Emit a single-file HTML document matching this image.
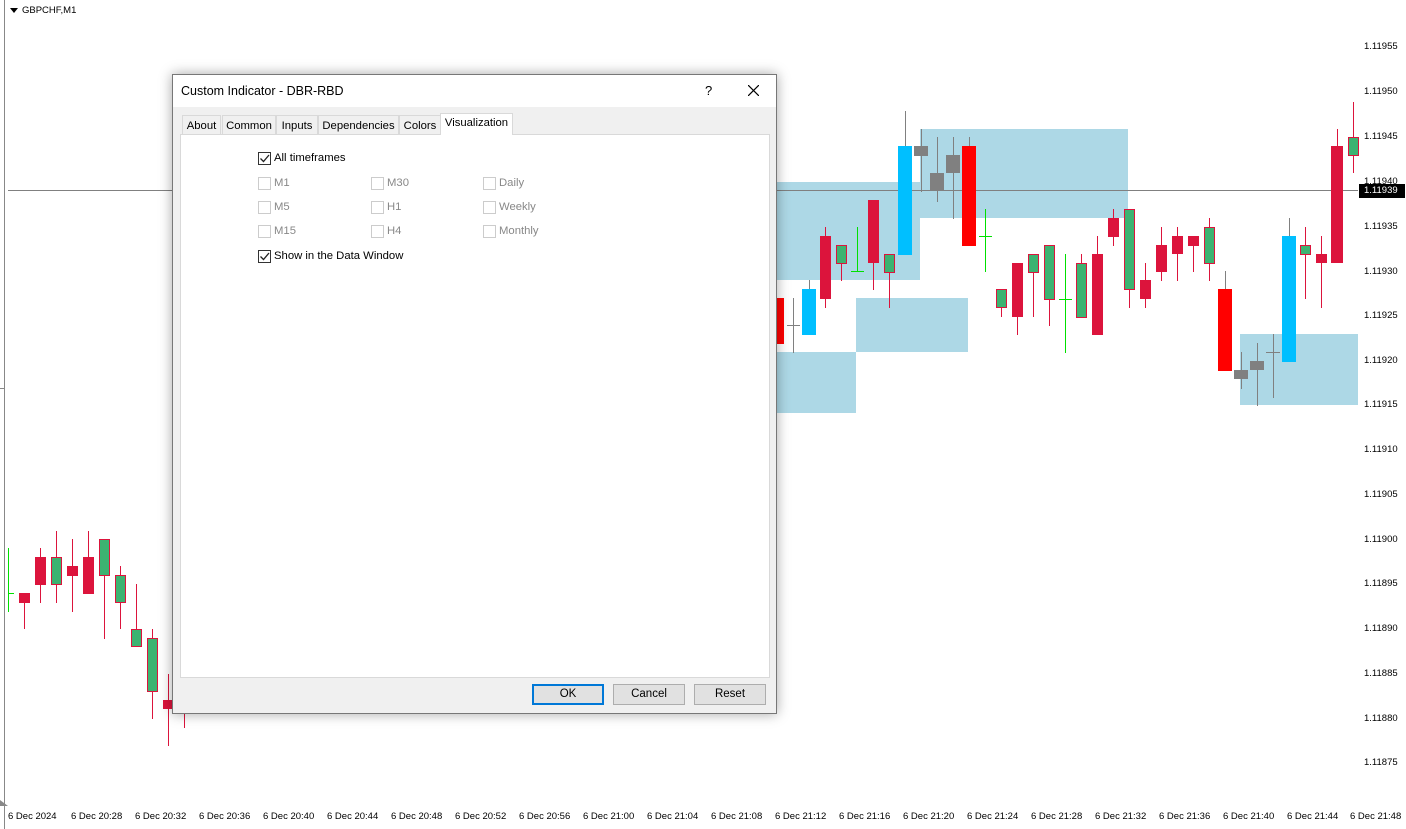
<!DOCTYPE html>
<html><head><meta charset="utf-8"><style>
*{margin:0;padding:0;box-sizing:border-box}
body{width:1406px;height:829px;background:#fff;position:relative;overflow:hidden;font-family:"Liberation Sans",Tahoma,sans-serif}
.pl{position:absolute;left:1364px;font-size:9.5px;color:#000}
.tl{position:absolute;top:811px;font-size:9.5px;color:#000;white-space:nowrap}
#dlg{position:absolute;left:172px;top:74px;width:605px;height:640px;background:#f0f0f0;border:1px solid #777;box-shadow:0 0 12px rgba(0,0,0,.35)}
#title{height:32px;background:#fff;font-size:12.5px;padding:9px 0 0 8px;color:#000;position:relative}
.tab{position:absolute;top:40px;height:20px;border:1px solid #d9d9d9;border-bottom:none;background:#f0f0f0;font-size:11.3px;padding:4px 0 0 0;text-align:center}
#panel{position:absolute;left:7px;top:59px;width:590px;height:544px;background:#fff;border:1px solid #d9d9d9}
.cb{position:absolute;width:13px;height:13px;border:1px solid #333;background:#fff}
.cb.d{border-color:#ccc}
.lb{position:absolute;font-size:11.3px;color:#000}
.lb.d{color:#888}
.btn{position:absolute;top:609px;width:72px;height:21px;background:#e1e1e1;border:1px solid #adadad;font-size:11.5px;text-align:center;padding-top:3px}
</style></head><body>
<svg width="1406" height="829" style="position:absolute;left:0;top:0">
<rect x="4" y="0" width="1" height="829" fill="#888"/>
<rect x="0" y="388" width="4" height="1" fill="#888"/>
<g fill="#add8e6">
<rect x="776" y="182" width="144" height="98"/>
<rect x="920" y="129" width="208" height="89"/>
<rect x="856" y="298" width="112" height="54"/>
<rect x="776" y="352" width="80" height="61"/>
<rect x="1240" y="334" width="118" height="71"/>
</g>
<rect x="8" y="190" width="1350" height="1" fill="#808080"/>
<g>
<rect x="8" y="548" width="1" height="64" fill="#00e000"/><rect x="8" y="593" width="6" height="1" fill="#00e000"/>
<rect x="24" y="593" width="1" height="36" fill="#dc143c"/><rect x="19" y="593" width="11" height="10" fill="#dc143c"/>
<rect x="40" y="548" width="1" height="55" fill="#dc143c"/><rect x="35" y="557" width="11" height="28" fill="#dc143c"/>
<rect x="56" y="531" width="1" height="72" fill="#dc143c"/><rect x="51.5" y="557.5" width="10" height="27" fill="#3cb371" stroke="#dc143c"/>
<rect x="72" y="539" width="1" height="73" fill="#dc143c"/><rect x="67" y="566" width="11" height="10" fill="#dc143c"/>
<rect x="88" y="531" width="1" height="63" fill="#dc143c"/><rect x="83" y="557" width="11" height="37" fill="#dc143c"/>
<rect x="104" y="539" width="1" height="100" fill="#dc143c"/><rect x="99.5" y="539.5" width="10" height="36" fill="#3cb371" stroke="#dc143c"/>
<rect x="120" y="566" width="1" height="63" fill="#dc143c"/><rect x="115.5" y="575.5" width="10" height="27" fill="#3cb371" stroke="#dc143c"/>
<rect x="136" y="584" width="1" height="63" fill="#dc143c"/><rect x="131.5" y="629.5" width="10" height="17" fill="#3cb371" stroke="#dc143c"/>
<rect x="152" y="629" width="1" height="90" fill="#dc143c"/><rect x="147.5" y="638.5" width="10" height="53" fill="#3cb371" stroke="#dc143c"/>
<rect x="168" y="674" width="1" height="72" fill="#dc143c"/><rect x="163" y="700" width="11" height="9" fill="#dc143c"/>
<rect x="184" y="700" width="1" height="28" fill="#dc143c"/>
</g>
<g>
<rect x="776" y="298" width="8" height="46" fill="#ff0000"/>
<rect x="793" y="298" width="1" height="55" fill="#808080"/><rect x="787" y="325" width="13" height="1" fill="#808080"/>
<rect x="809" y="280" width="1" height="10" fill="#808080"/><rect x="802" y="289" width="14" height="46" fill="#00bfff"/>
<rect x="825" y="227" width="1" height="81" fill="#dc143c"/><rect x="820" y="236" width="11" height="63" fill="#dc143c"/>
<rect x="841" y="245" width="1" height="36" fill="#dc143c"/><rect x="836.5" y="245.5" width="10" height="18" fill="#3cb371" stroke="#dc143c"/>
<rect x="857" y="227" width="1" height="45" fill="#00e000"/><rect x="851" y="271" width="13" height="1" fill="#00e000"/>
<rect x="873" y="200" width="1" height="90" fill="#dc143c"/><rect x="868" y="200" width="11" height="63" fill="#dc143c"/>
<rect x="889" y="254" width="1" height="54" fill="#dc143c"/><rect x="884.5" y="254.5" width="10" height="18" fill="#3cb371" stroke="#dc143c"/>
<rect x="905" y="111" width="1" height="36" fill="#808080"/><rect x="898" y="146" width="14" height="109" fill="#00bfff"/>
<rect x="921" y="129" width="1" height="63" fill="#808080"/><rect x="914" y="146" width="14" height="10" fill="#808080"/>
<rect x="937" y="137" width="1" height="65" fill="#808080"/><rect x="930" y="173" width="14" height="18" fill="#808080"/>
<rect x="953" y="137" width="1" height="82" fill="#808080"/><rect x="946" y="155" width="14" height="18" fill="#808080"/>
<rect x="969" y="137" width="1" height="10" fill="#808080"/><rect x="962" y="146" width="14" height="100" fill="#ff0000"/>
<rect x="985" y="209" width="1" height="63" fill="#00e000"/><rect x="979" y="236" width="13" height="1" fill="#00e000"/>
<rect x="1001" y="289" width="1" height="28" fill="#dc143c"/><rect x="996.5" y="289.5" width="10" height="18" fill="#3cb371" stroke="#dc143c"/>
<rect x="1017" y="263" width="1" height="72" fill="#dc143c"/><rect x="1012" y="263" width="11" height="54" fill="#dc143c"/>
<rect x="1033" y="254" width="1" height="63" fill="#dc143c"/><rect x="1028.5" y="254.5" width="10" height="18" fill="#3cb371" stroke="#dc143c"/>
<rect x="1049" y="245" width="1" height="81" fill="#dc143c"/><rect x="1044.5" y="245.5" width="10" height="54" fill="#3cb371" stroke="#dc143c"/>
<rect x="1065" y="254" width="1" height="99" fill="#00e000"/><rect x="1059" y="299" width="13" height="1" fill="#00e000"/>
<rect x="1081" y="254" width="1" height="63" fill="#dc143c"/><rect x="1076.5" y="263.5" width="10" height="54" fill="#3cb371" stroke="#dc143c"/>
<rect x="1097" y="236" width="1" height="99" fill="#dc143c"/><rect x="1092" y="254" width="11" height="81" fill="#dc143c"/>
<rect x="1113" y="209" width="1" height="37" fill="#dc143c"/><rect x="1108" y="218" width="11" height="19" fill="#dc143c"/>
<rect x="1129" y="209" width="1" height="99" fill="#dc143c"/><rect x="1124.5" y="209.5" width="10" height="80" fill="#3cb371" stroke="#dc143c"/>
<rect x="1145" y="263" width="1" height="45" fill="#dc143c"/><rect x="1140" y="280" width="11" height="19" fill="#dc143c"/>
<rect x="1161" y="227" width="1" height="54" fill="#dc143c"/><rect x="1156" y="245" width="11" height="27" fill="#dc143c"/>
<rect x="1177" y="227" width="1" height="54" fill="#dc143c"/><rect x="1172" y="236" width="11" height="18" fill="#dc143c"/>
<rect x="1193" y="236" width="1" height="36" fill="#dc143c"/><rect x="1188" y="236" width="11" height="10" fill="#dc143c"/>
<rect x="1209" y="218" width="1" height="63" fill="#dc143c"/><rect x="1204.5" y="227.5" width="10" height="36" fill="#3cb371" stroke="#dc143c"/>
<rect x="1225" y="271" width="1" height="19" fill="#808080"/><rect x="1218" y="289" width="14" height="82" fill="#ff0000"/>
<rect x="1241" y="352" width="1" height="37" fill="#808080"/><rect x="1234" y="370" width="14" height="9" fill="#808080"/>
<rect x="1257" y="343" width="1" height="63" fill="#808080"/><rect x="1250" y="361" width="14" height="9" fill="#808080"/>
<rect x="1273" y="334" width="1" height="64" fill="#808080"/><rect x="1266" y="352" width="14" height="1" fill="#808080"/>
<rect x="1289" y="218" width="1" height="19" fill="#808080"/><rect x="1282" y="236" width="14" height="126" fill="#00bfff"/>
<rect x="1305" y="227" width="1" height="72" fill="#dc143c"/><rect x="1300.5" y="245.5" width="10" height="9" fill="#3cb371" stroke="#dc143c"/>
<rect x="1321" y="236" width="1" height="72" fill="#dc143c"/><rect x="1316" y="254" width="11" height="9" fill="#dc143c"/>
<rect x="1337" y="129" width="1" height="134" fill="#dc143c"/><rect x="1331" y="146" width="12" height="117" fill="#dc143c"/>
<rect x="1353" y="102" width="1" height="71" fill="#dc143c"/><rect x="1348.5" y="137.5" width="10" height="18" fill="#3cb371" stroke="#dc143c"/>
</g>
<rect x="1359" y="184" width="46" height="14" fill="#000"/>
<polygon points="10,8 18,8 14,13" fill="#000"/>
<polygon points="0,800 8,806 0,806" fill="#888"/>
</svg>
<div style="position:absolute;left:22px;top:5px;font-size:9.5px">GBPCHF,M1</div>
<div class="pl" style="top:41px">1.11955</div>
<div class="pl" style="top:86px">1.11950</div>
<div class="pl" style="top:131px">1.11945</div>
<div class="pl" style="top:176px">1.11940</div>
<div class="pl" style="top:185px;color:#fff;background:#000">1.11939</div>
<div class="pl" style="top:221px">1.11935</div>
<div class="pl" style="top:266px">1.11930</div>
<div class="pl" style="top:310px">1.11925</div>
<div class="pl" style="top:355px">1.11920</div>
<div class="pl" style="top:399px">1.11915</div>
<div class="pl" style="top:444px">1.11910</div>
<div class="pl" style="top:489px">1.11905</div>
<div class="pl" style="top:534px">1.11900</div>
<div class="pl" style="top:578px">1.11895</div>
<div class="pl" style="top:623px">1.11890</div>
<div class="pl" style="top:668px">1.11885</div>
<div class="pl" style="top:713px">1.11880</div>
<div class="pl" style="top:757px">1.11875</div>
<div class="tl" style="left:8px">6 Dec 2024</div>
<div class="tl" style="left:71px">6 Dec 20:28</div>
<div class="tl" style="left:135px">6 Dec 20:32</div>
<div class="tl" style="left:199px">6 Dec 20:36</div>
<div class="tl" style="left:263px">6 Dec 20:40</div>
<div class="tl" style="left:327px">6 Dec 20:44</div>
<div class="tl" style="left:391px">6 Dec 20:48</div>
<div class="tl" style="left:455px">6 Dec 20:52</div>
<div class="tl" style="left:519px">6 Dec 20:56</div>
<div class="tl" style="left:583px">6 Dec 21:00</div>
<div class="tl" style="left:647px">6 Dec 21:04</div>
<div class="tl" style="left:711px">6 Dec 21:08</div>
<div class="tl" style="left:775px">6 Dec 21:12</div>
<div class="tl" style="left:839px">6 Dec 21:16</div>
<div class="tl" style="left:903px">6 Dec 21:20</div>
<div class="tl" style="left:967px">6 Dec 21:24</div>
<div class="tl" style="left:1031px">6 Dec 21:28</div>
<div class="tl" style="left:1095px">6 Dec 21:32</div>
<div class="tl" style="left:1159px">6 Dec 21:36</div>
<div class="tl" style="left:1223px">6 Dec 21:40</div>
<div class="tl" style="left:1287px">6 Dec 21:44</div>
<div class="tl" style="left:1350px">6 Dec 21:48</div>

<div id="dlg">
<div id="title">Custom Indicator - DBR-RBD
<span style="position:absolute;left:532px;top:8px;font-size:13px">?</span>
<svg style="position:absolute;left:575px;top:10px" width="11" height="11"><path d="M0 0L11 11M11 0L0 11" stroke="#000" stroke-width="1.2"/></svg>
</div>
<div class="tab" style="left:9px;width:39px">About</div>
<div class="tab" style="left:49px;width:54px">Common</div>
<div class="tab" style="left:103px;width:42px">Inputs</div>
<div class="tab" style="left:145px;width:81px">Dependencies</div>
<div class="tab" style="left:226px;width:42px">Colors</div>
<div id="panel"></div>
<div class="tab" style="left:267px;top:38px;height:22px;width:73px;background:#fff;padding-top:3px;z-index:2">Visualization</div>
<div class="cb" style="left:85px;top:77px"><svg width="11" height="11" style="position:absolute;left:0;top:0"><path d="M1.5 5.5L4.5 8.5L10 2" stroke="#222" stroke-width="1.3" fill="none"/></svg></div>
<div class="lb" style="left:101px;top:77px">All timeframes</div>
<div class="cb d" style="left:85px;top:102px"></div><div class="lb d" style="left:101px;top:102px">M1</div>
<div class="cb d" style="left:198px;top:102px"></div><div class="lb d" style="left:214px;top:102px">M30</div>
<div class="cb d" style="left:310px;top:102px"></div><div class="lb d" style="left:326px;top:102px">Daily</div>
<div class="cb d" style="left:85px;top:126px"></div><div class="lb d" style="left:101px;top:126px">M5</div>
<div class="cb d" style="left:198px;top:126px"></div><div class="lb d" style="left:214px;top:126px">H1</div>
<div class="cb d" style="left:310px;top:126px"></div><div class="lb d" style="left:326px;top:126px">Weekly</div>
<div class="cb d" style="left:85px;top:150px"></div><div class="lb d" style="left:101px;top:150px">M15</div>
<div class="cb d" style="left:198px;top:150px"></div><div class="lb d" style="left:214px;top:150px">H4</div>
<div class="cb d" style="left:310px;top:150px"></div><div class="lb d" style="left:326px;top:150px">Monthly</div>
<div class="cb" style="left:85px;top:175px"><svg width="11" height="11" style="position:absolute;left:0;top:0"><path d="M1.5 5.5L4.5 8.5L10 2" stroke="#222" stroke-width="1.3" fill="none"/></svg></div>
<div class="lb" style="left:101px;top:175px">Show in the Data Window</div>
<div class="btn" style="left:359px;border:2px solid #0078d7;padding-top:2px">OK</div>
<div class="btn" style="left:440px">Cancel</div>
<div class="btn" style="left:521px">Reset</div>
</div>
</body></html>
